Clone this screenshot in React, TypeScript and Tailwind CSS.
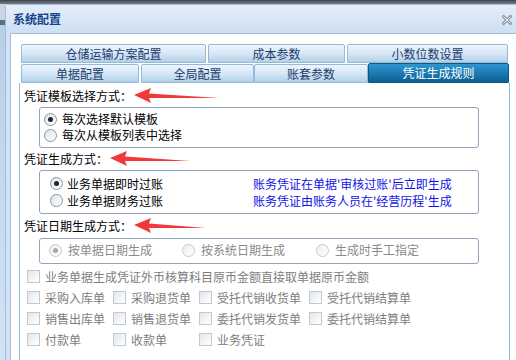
import React from "react";

function Arrow({ w = 86 }: { w?: number }) {
  return (
    <svg width={w} height="16" viewBox={`0 0 ${w} 16`} className="shrink-0">
      <polygon
        points={`0,7 17,0 15,5.5 ${w},10 15,10 17,15`}
        fill="#f03a3a"
      />
    </svg>
  );
}

function Radio({ checked, disabled }: { checked?: boolean; disabled?: boolean }) {
  return (
    <span
      className={
        disabled
          ? "w-[13px] h-[13px] shrink-0 rounded-full border border-[#c3c9d0] bg-linear-to-br from-[#eceef0] to-white flex items-center justify-center"
          : "w-[13px] h-[13px] shrink-0 rounded-full border border-[#8a949f] bg-linear-to-br from-[#dfe3e8] to-white flex items-center justify-center"
      }
    >
      {checked && (
        <span
          className={
            disabled
              ? "w-[5px] h-[5px] rounded-full bg-[#a2a8ae]"
              : "w-[5px] h-[5px] rounded-full bg-[#1b2633]"
          }
        />
      )}
    </span>
  );
}

function Check() {
  return (
    <span className="w-[13px] h-[13px] shrink-0 border border-[#c0c8d1] bg-linear-to-br from-[#e3e7eb] to-white" />
  );
}

function Tab({ label, w, active }: { label: string; w: string; active?: boolean }) {
  if (active) {
    return (
      <div
        className={`${w} h-[20px] -mt-px flex items-center justify-center rounded-t-[2px] border border-[#0d5a8a] bg-linear-to-b from-[#2d97d2] to-[#0c5f93] text-white`}
      >
        {label}
      </div>
    );
  }
  return (
    <div
      className={`${w} h-[19px] flex items-center justify-center rounded-t-[2px] border border-[#95bad8] bg-linear-to-b from-[#eef5fc] via-[#d6e7f6] to-[#b3d0e8] text-[#1d3b6c]`}
    >
      {label}
    </div>
  );
}

function CheckItem({ label, w }: { label: string; w: string }) {
  return (
    <div className={`${w} flex items-center gap-[5px]`}>
      <Check />
      <span className="text-[#7d7d7d]">{label}</span>
    </div>
  );
}

export default function App() {
  return (
    <div className="w-[516px] h-[360px] overflow-hidden flex flex-col bg-[#c5d7ec] text-[12px] leading-[16px] font-['Noto_Sans_CJK_SC','Noto_Sans',sans-serif]">
      <div className="h-[4px] shrink-0 bg-linear-to-b from-[#3f454c] to-[#767e88]" />
      <div className="flex flex-1 min-h-0">
        <div className="w-[5px] shrink-0 flex flex-col">
          <div className="h-[16px] bg-[#c9d5e3]" />
          <div className="h-[5px] bg-[#5a6d84]" />
          <div className="flex-1 bg-linear-to-b from-[#b9cfe8] to-[#d4e3f3]" />
        </div>
        <div className="flex-1 flex flex-col min-w-0 rounded-tl-[4px] border-l border-t border-[#9fbfe2] bg-[#d3e3f5]">
          <div className="h-[28px] shrink-0 flex items-center justify-between pl-[7px] pr-[4px] bg-linear-to-b from-[#e4eefa] to-[#cddff3]">
            <span className="font-bold text-[#15428b]">系统配置</span>
            <svg width="10" height="10" viewBox="0 0 10 10" className="mt-[2px]">
              <path d="M1.5 1.5 L8.5 8.5 M8.5 1.5 L1.5 8.5" stroke="#8e969f" strokeWidth="3" strokeLinecap="square" />
              <path d="M1.5 1.5 L8.5 8.5 M8.5 1.5 L1.5 8.5" stroke="#eef2f6" strokeWidth="1" />
            </svg>
          </div>
          <div className="flex-1 min-h-0 pl-[4px] flex">
            <div className="flex-1 min-h-0 flex flex-col bg-white border-l border-t border-[#9fbfe2] pt-[10px]">
              <div className="pl-[10px] flex flex-col gap-px">
                <div className="flex">
                  <Tab label="仓储运输方案配置" w="w-[185px]" />
                  <div className="w-[2px]" />
                  <Tab label="成本参数" w="w-[137px]" />
                  <div className="w-[2px]" />
                  <Tab label="小数位数设置" w="w-[161px]" />
                </div>
                <div className="flex">
                  <Tab label="单据配置" w="w-[118px]" />
                  <div className="w-[2px]" />
                  <Tab label="全局配置" w="w-[113px]" />
                  <Tab label="账套参数" w="w-[114px]" />
                  <Tab label="凭证生成规则" w="w-[141px]" active />
                </div>
              </div>
              <div className="ml-[8px] w-[491px] flex-1 border-l border-r border-[#8dbbe0] pt-[5px] text-black">
                <div className="h-[16px] pl-[4px] flex items-center gap-[2px]">
                  <span>凭证模板选择方式：</span>
                  <Arrow w={85} />
                </div>
                <div className="mt-[3px] ml-[19px] w-[440px] h-[41px] rounded-[3px] border border-[#90a5bb] pt-[3px] pl-[4px]">
                  <div className="h-[16px] flex items-center gap-[5px]">
                    <Radio checked />
                    <span>每次选择默认模板</span>
                  </div>
                  <div className="h-[16px] flex items-center gap-[5px]">
                    <Radio />
                    <span>每次从模板列表中选择</span>
                  </div>
                </div>
                <div className="mt-[3px] h-[16px] pl-[4px] flex items-center gap-[2px]">
                  <span>凭证生成方式：</span>
                  <Arrow w={80} />
                </div>
                <div className="mt-[3px] ml-[19px] w-[440px] h-[44px] rounded-[3px] border border-[#90a5bb] pt-[4px] pl-[10px]">
                  <div className="h-[17px] flex items-center">
                    <div className="w-[203px] flex items-center gap-[4px]">
                      <Radio checked />
                      <span>业务单据即时过账</span>
                    </div>
                    <span className="text-[#1212e8]">账务凭证在单据'审核过账'后立即生成</span>
                  </div>
                  <div className="h-[17px] flex items-center">
                    <div className="w-[203px] flex items-center gap-[4px]">
                      <Radio />
                      <span>业务单据财务过账</span>
                    </div>
                    <span className="text-[#1212e8]">账务凭证由账务人员在'经营历程'生成</span>
                  </div>
                </div>
                <div className="mt-[4px] h-[16px] pl-[4px] flex items-center gap-[2px]">
                  <span>凭证日期生成方式：</span>
                  <Arrow w={72} />
                </div>
                <div className="mt-[4px] ml-[19px] w-[440px] h-[26px] rounded-[3px] border border-[#90a5bb] pt-[3px] pl-[9px] flex text-[#8a8a8a]">
                  <div className="w-[133px] h-[16px] flex items-center gap-[6px]">
                    <Radio checked disabled />
                    <span>按单据日期生成</span>
                  </div>
                  <div className="w-[134px] h-[16px] flex items-center gap-[6px]">
                    <Radio disabled />
                    <span>按系统日期生成</span>
                  </div>
                  <div className="h-[16px] flex items-center gap-[6px]">
                    <Radio disabled />
                    <span>生成时手工指定</span>
                  </div>
                </div>
                <div className="mt-[2px] pl-[7px]">
                  <div className="h-[21px] flex items-center">
                    <CheckItem label="业务单据生成凭证外币核算科目原币金额直接取单据原币金额" w="w-[400px]" />
                  </div>
                  <div className="h-[21px] flex items-center">
                    <CheckItem label="采购入库单" w="w-[86px]" />
                    <CheckItem label="采购退货单" w="w-[86px]" />
                    <CheckItem label="受托代销收货单" w="w-[110px]" />
                    <CheckItem label="受托代销结算单" w="w-[120px]" />
                  </div>
                  <div className="h-[21px] flex items-center">
                    <CheckItem label="销售出库单" w="w-[86px]" />
                    <CheckItem label="销售退货单" w="w-[86px]" />
                    <CheckItem label="委托代销发货单" w="w-[110px]" />
                    <CheckItem label="委托代销结算单" w="w-[120px]" />
                  </div>
                  <div className="h-[21px] flex items-center">
                    <CheckItem label="付款单" w="w-[86px]" />
                    <CheckItem label="收款单" w="w-[86px]" />
                    <CheckItem label="业务凭证" w="w-[110px]" />
                  </div>
                </div>
              </div>
            </div>
          </div>
        </div>
      </div>
    </div>
  );
}
